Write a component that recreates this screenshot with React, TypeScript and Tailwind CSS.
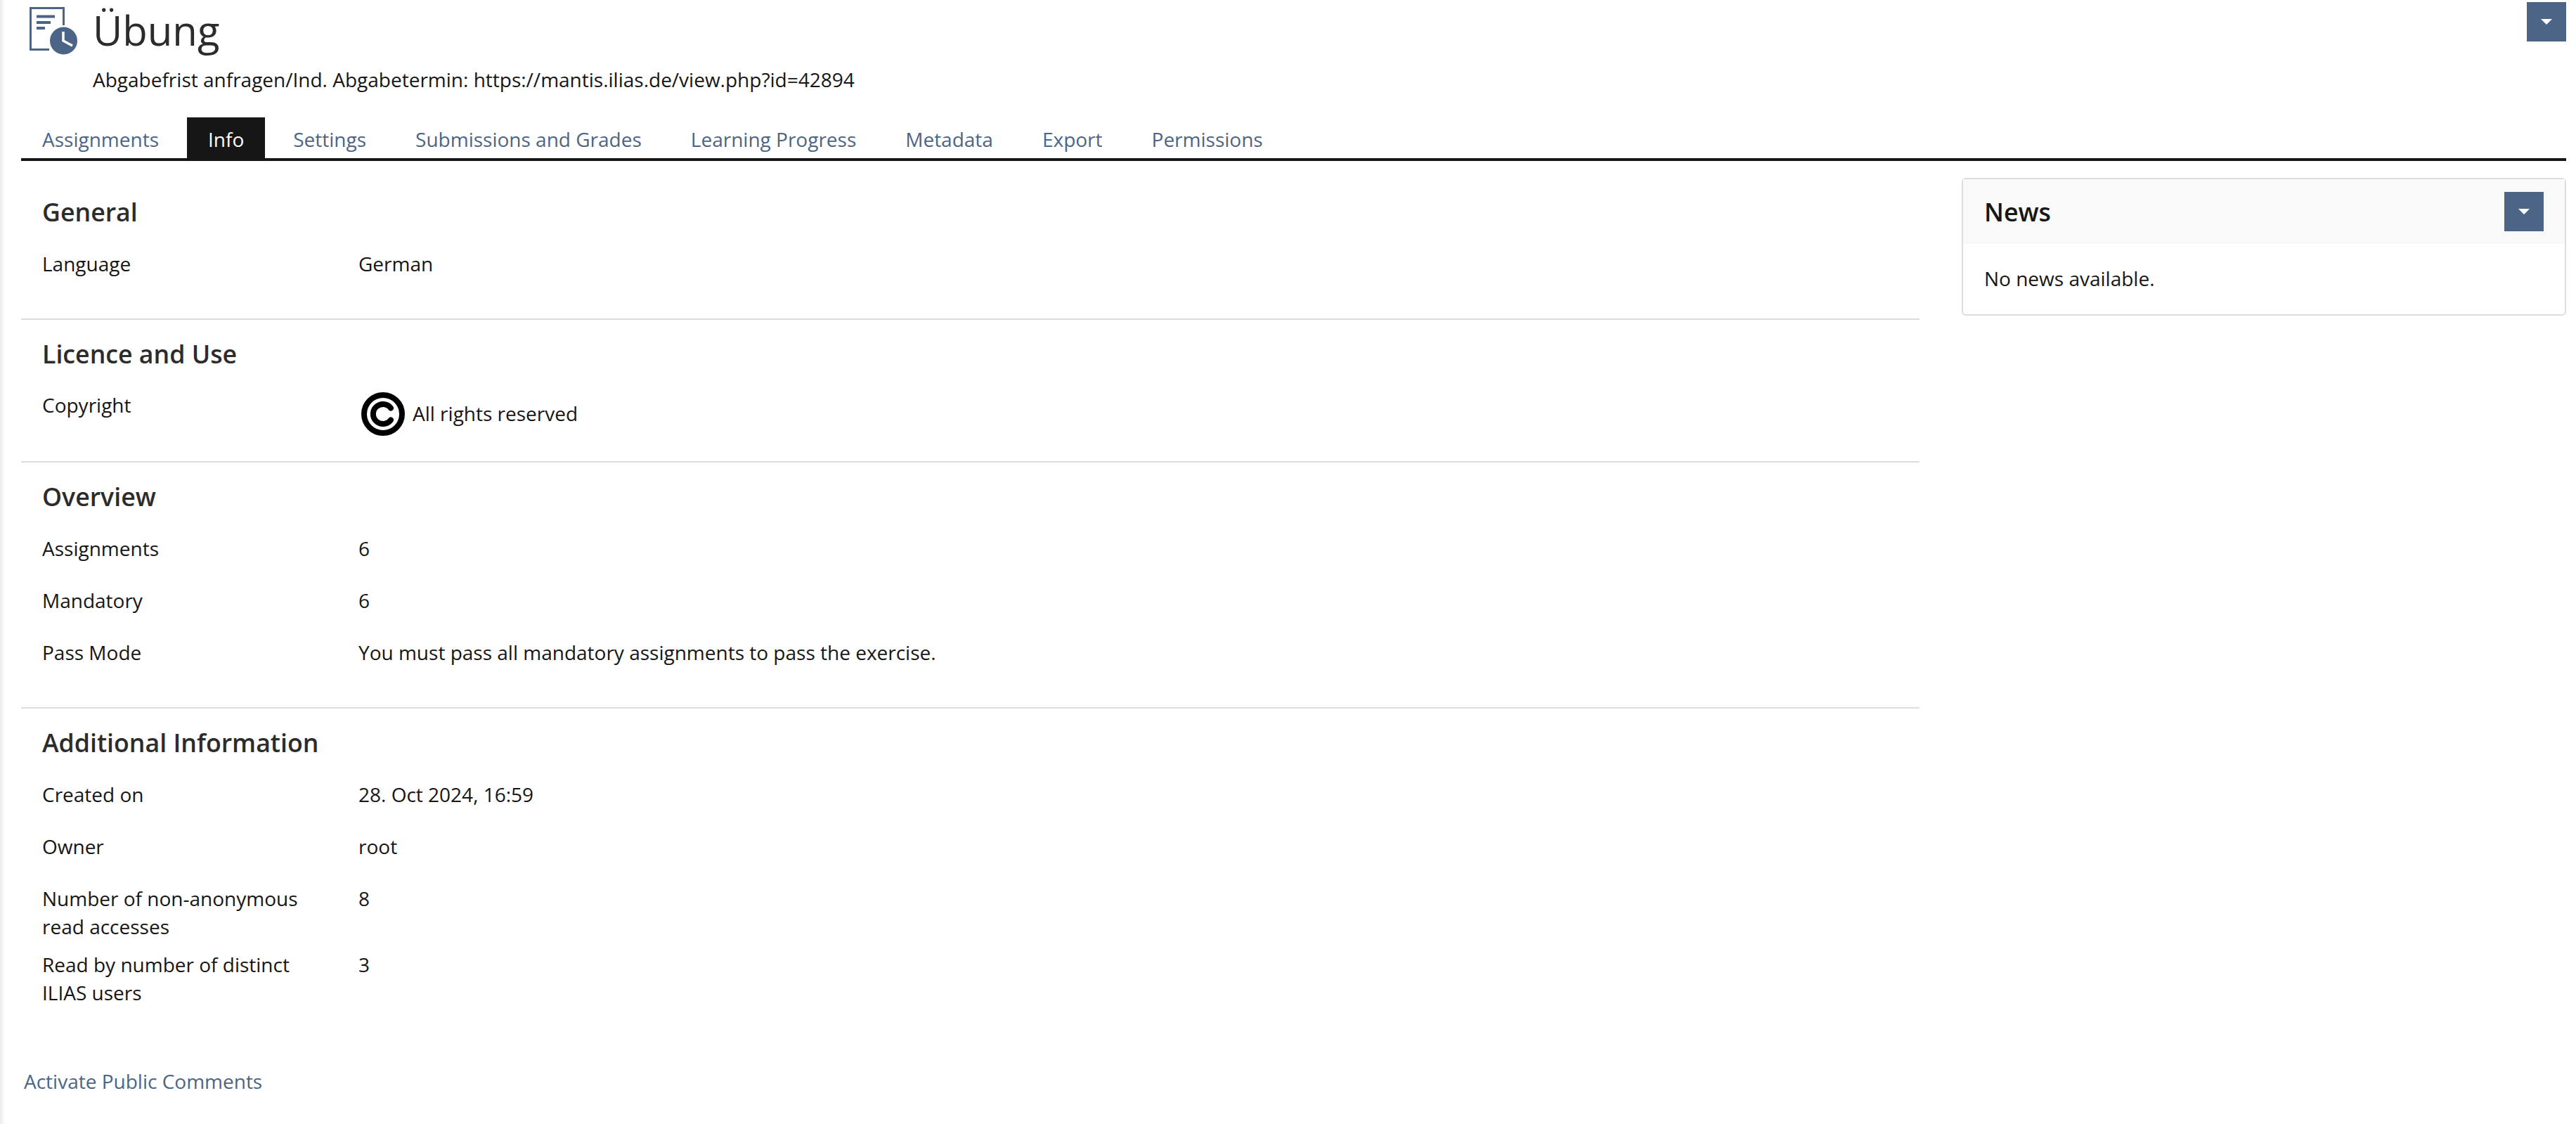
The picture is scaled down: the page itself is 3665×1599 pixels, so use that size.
import React from "react";

const tabs = ["Assignments", "Info", "Settings", "Submissions and Grades", "Learning Progress", "Metadata", "Export", "Permissions"];

function CaretButton() {
  return (
    <button className="flex h-[56px] w-[56px] shrink-0 items-center justify-center bg-[#4c6586]">
      <span className="h-0 w-0 border-x-[8px] border-t-[8px] border-x-transparent border-t-white" />
    </button>
  );
}

function ExerciseIcon() {
  return (
    <svg className="h-[70px] w-[70px] shrink-0" viewBox="0 0 70 70">
      <path d="M28 60.5H1.5V1.5H48.5V26" fill="none" stroke="#4c6586" strokeWidth="3" />
      <rect x="10" y="11.5" width="26" height="4" fill="#4c6586" />
      <rect x="10" y="20" width="20" height="4" fill="#4c6586" />
      <rect x="10" y="28" width="12" height="4" fill="#4c6586" />
      <circle cx="48.5" cy="48" r="19.5" fill="#4c6586" />
      <path d="M48 35V48L61 55" fill="none" stroke="#fff" strokeWidth="3.5" />
    </svg>
  );
}

function CopyrightIcon() {
  return (
    <svg className="h-[62px] w-[62px] shrink-0" viewBox="0 0 62 62">
      <circle cx="31" cy="31" r="27" fill="none" stroke="#000" strokeWidth="8" />
      <path d="M42 22.5A14 14 0 1 0 42 39.5" fill="none" stroke="#000" strokeWidth="8" strokeLinecap="round" />
    </svg>
  );
}

function Row({ label, children }: { label: string; children: React.ReactNode }) {
  return (
    <div className="mb-[14px] flex min-h-[60px]">
      <div className="w-[450px] shrink-0 pr-[30px]">{label}</div>
      <div>{children}</div>
    </div>
  );
}

function Section({ title, last, children }: { title: string; last?: boolean; children: React.ReactNode }) {
  return (
    <section className={last ? "pt-[26px]" : "border-b-2 border-[#dddddd] pt-[26px] pb-[24px]"}>
      <h2 className="mb-[32px] pl-[30px] text-[35.7px] leading-[44px] font-semibold text-[#2c2c2c]">{title}</h2>
      <div className="pl-[30px]">{children}</div>
    </section>
  );
}

export default function App() {
  return (
    <div className="relative min-h-[1599px] bg-white pr-[14px] pl-[30px] font-['Open_Sans',sans-serif] text-[28px] leading-[40px] text-[#161616]">
      <div className="absolute top-0 bottom-0 left-0 w-[7px] bg-gradient-to-r from-[#ebebeb] to-white" />

      <header className="flex h-[167px] justify-between pt-[3px]">
        <div className="flex">
          <div className="ml-[12px] w-[90px] pt-[7px]">
            <ExerciseIcon />
          </div>
          <div>
            <h1 className="text-[58px] leading-[80px] font-normal text-[#2c2c2c]">Übung</h1>
            <p className="mt-[10px]">Abgabefrist anfragen/Ind. Abgabetermin: https://mantis.ilias.de/view.php?id=42894</p>
          </div>
        </div>
        <CaretButton />
      </header>

      <nav className="flex h-[62px] border-b-4 border-[#161616]">
        {tabs.map((tab) =>
          tab === "Info" ? (
            <div key={tab} className="mr-[10px] flex h-[58px] items-center bg-[#161616] px-[30px] pt-[3px] text-white">{tab}</div>
          ) : (
            <div key={tab} className="mr-[10px] flex h-[58px] items-center px-[30px] pt-[3px] text-[#4c6586]">{tab}</div>
          )
        )}
      </nav>

      <div className="flex">
        <main className="mt-[24px] w-[2701px] shrink-0">
          <Section title="General">
            <Row label="Language">German</Row>
          </Section>
          <Section title="Licence and Use">
            <div className="flex h-[61px]">
              <div className="-mt-[1px] w-[450px] shrink-0">Copyright</div>
              <div className="mt-[1px] ml-[4px] flex h-[62px] items-center gap-[11px]">
                <CopyrightIcon />
                <span className="-mt-[2px]">All rights reserved</span>
              </div>
            </div>
            <div className="h-[14px]" />
          </Section>
          <Section title="Overview">
            <Row label="Assignments">6</Row>
            <Row label="Mandatory">6</Row>
            <Row label="Pass Mode">You must pass all mandatory assignments to pass the exercise.</Row>
          </Section>
          <Section title="Additional Information" last>
            <Row label="Created on">28. Oct 2024, 16:59</Row>
            <Row label="Owner">root</Row>
            <Row label="Number of non-anonymous read accesses">8</Row>
            <Row label="Read by number of distinct ILIAS users">3</Row>
          </Section>
          <a className="mt-[86px] ml-[4px] block text-[#4c6586]">Activate Public Comments</a>
        </main>

        <aside className="mt-[24px] ml-[60px] h-[196px] w-[860px] rounded-[6px] border-2 border-[#dddddd]">
          <div className="flex h-[92px] items-center justify-between bg-[#f9f9f9] pr-[30px] pl-[30px]">
            <h2 className="text-[35.7px] leading-[44px] font-semibold text-[#161616]">News</h2>
            <CaretButton />
          </div>
          <p className="pt-[29px] pl-[30px]">No news available.</p>
        </aside>
      </div>
    </div>
  );
}
